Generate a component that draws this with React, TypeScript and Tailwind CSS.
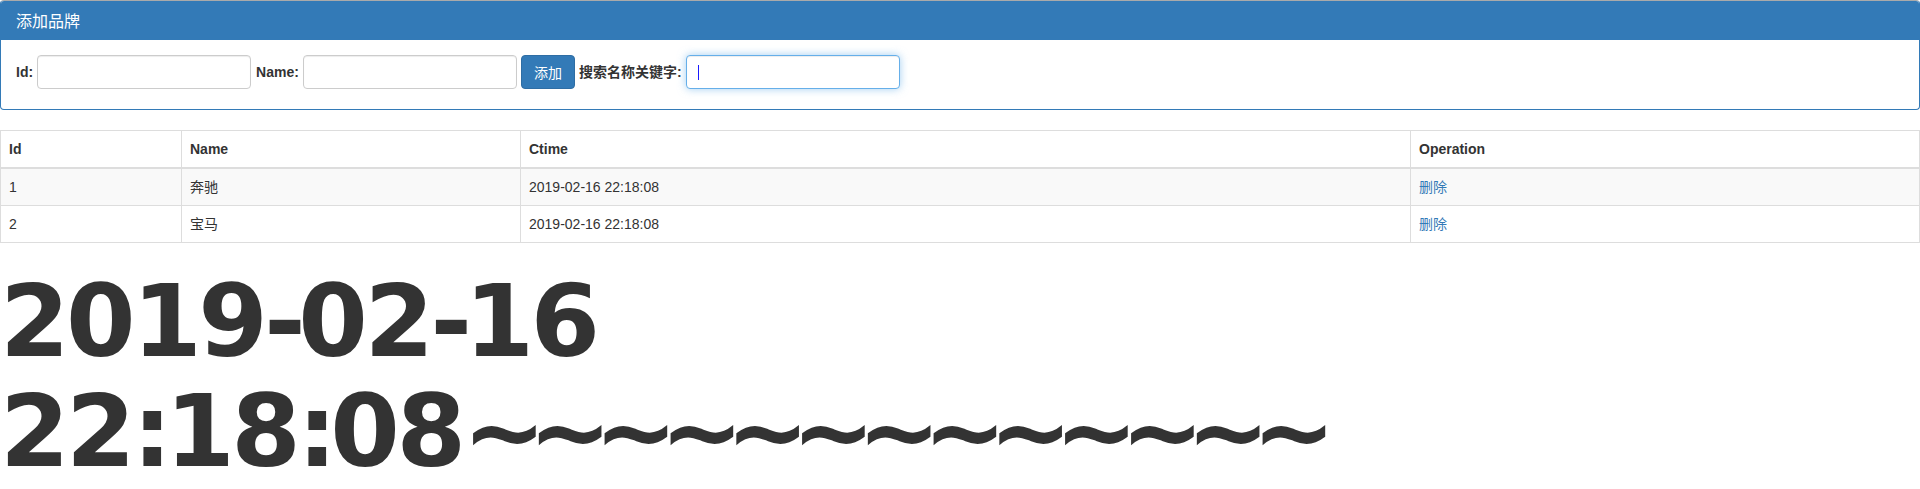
import React from "react";

const rows = [
  { id: 1, name: "奔驰", ctime: "2019-02-16 22:18:08" },
  { id: 2, name: "宝马", ctime: "2019-02-16 22:18:08" },
];

function Label({ children }: { children: React.ReactNode }) {
  return <span className="text-[14px] font-bold text-[#333] leading-[20px] whitespace-nowrap">{children}</span>;
}

function Input() {
  return (
    <input
      type="text"
      className="w-[214px] h-[34px] rounded-[4px] border border-[#ccc] bg-white px-[12px] text-[14px] shadow-[inset_0_1px_1px_rgba(0,0,0,0.075)] outline-none"
    />
  );
}

export default function App() {
  return (
    <div className="w-[1920px] bg-white text-[#333] font-['Liberation_Sans','Noto_Sans_CJK_SC',sans-serif]">
      {/* panel */}
      <div className="w-[1920px] rounded-[4px] border border-[#337ab7] border-t-[#aaaaaa] overflow-hidden">
        <div className="h-[39px] bg-[#337ab7] px-[15px] flex items-center">
          <span className="text-white text-[16px] leading-[17.6px] font-['Noto_Sans_CJK_SC',sans-serif]">添加品牌</span>
        </div>
        <div className="h-[69px] pt-[15px] px-[15px] flex items-start gap-[4px]">
          <div className="h-[34px] flex items-center"><Label>Id:</Label></div>
          <Input />
          <div className="h-[34px] flex items-center ml-[1px]"><Label>Name:</Label></div>
          <Input />
          <button className="h-[34px] w-[54px] rounded-[4px] border border-[#2e6da4] bg-[#337ab7] text-white text-[14px] font-['Noto_Sans_CJK_SC',sans-serif]">
            添加
          </button>
          <div className="h-[34px] flex items-center"><Label>搜索名称关键字:</Label></div>
          <div className="relative">
            <input
              type="text"
              className="w-[214px] h-[34px] rounded-[4px] border border-[#66afe9] bg-white px-[12px] text-[14px] outline-none shadow-[inset_0_1px_1px_rgba(0,0,0,0.075),0_0_8px_rgba(102,175,233,0.6)]"
            />
            <span className="absolute left-[12px] top-[10px] w-[1px] h-[15px] bg-[#1a1aff]" />
          </div>
        </div>
      </div>

      {/* table */}
      <table className="mt-[20px] w-[1920px] table-fixed border-collapse border border-[#ddd] text-[14px] leading-[20px]">
        <colgroup>
          <col className="w-[181px]" />
          <col className="w-[339px]" />
          <col className="w-[890px]" />
          <col />
        </colgroup>
        <thead>
          <tr>
            {["Id", "Name", "Ctime", "Operation"].map((h) => (
              <th key={h} className="p-[8px] text-left font-bold border border-[#ddd] border-b-2 align-bottom">
                {h}
              </th>
            ))}
          </tr>
        </thead>
        <tbody>
          {rows.map((r, i) => (
            <tr key={r.id} className={i % 2 === 0 ? "bg-[#f9f9f9]" : "bg-white"}>
              <td className="p-[8px] border border-[#ddd]">{r.id}</td>
              <td className="p-[8px] border border-[#ddd]">{r.name}</td>
              <td className="p-[8px] border border-[#ddd]">{r.ctime}</td>
              <td className="p-[8px] border border-[#ddd]">
                <a href="#" className="text-[#337ab7] no-underline">删除</a>
              </td>
            </tr>
          ))}
        </tbody>
      </table>

      {/* big text */}
      <h1 className="mt-[24px] text-[100px] leading-[110px] font-bold text-[#333] font-['DejaVu_Sans',sans-serif] whitespace-nowrap">
        <div>
          <span className="tracking-[-3.5px]">2019</span>
          <span className="tracking-[-7.5px]">-</span>
          <span className="tracking-[-3.5px]">02</span>
          <span className="tracking-[-7.5px]">-</span>
          <span className="tracking-[-3.5px]">16</span>
        </div>
        <div>
          <span className="tracking-[-3.5px]">22</span>
          <span className="tracking-[-7px]">:</span>
          <span className="tracking-[-3.5px]">18</span>
          <span className="tracking-[-7px]">:</span>
          <span className="tracking-[-3.5px]">08</span>
          <span className="tracking-[-18px]">~~~~~~~~~~~~~</span>
        </div>
      </h1>
    </div>
  );
}
